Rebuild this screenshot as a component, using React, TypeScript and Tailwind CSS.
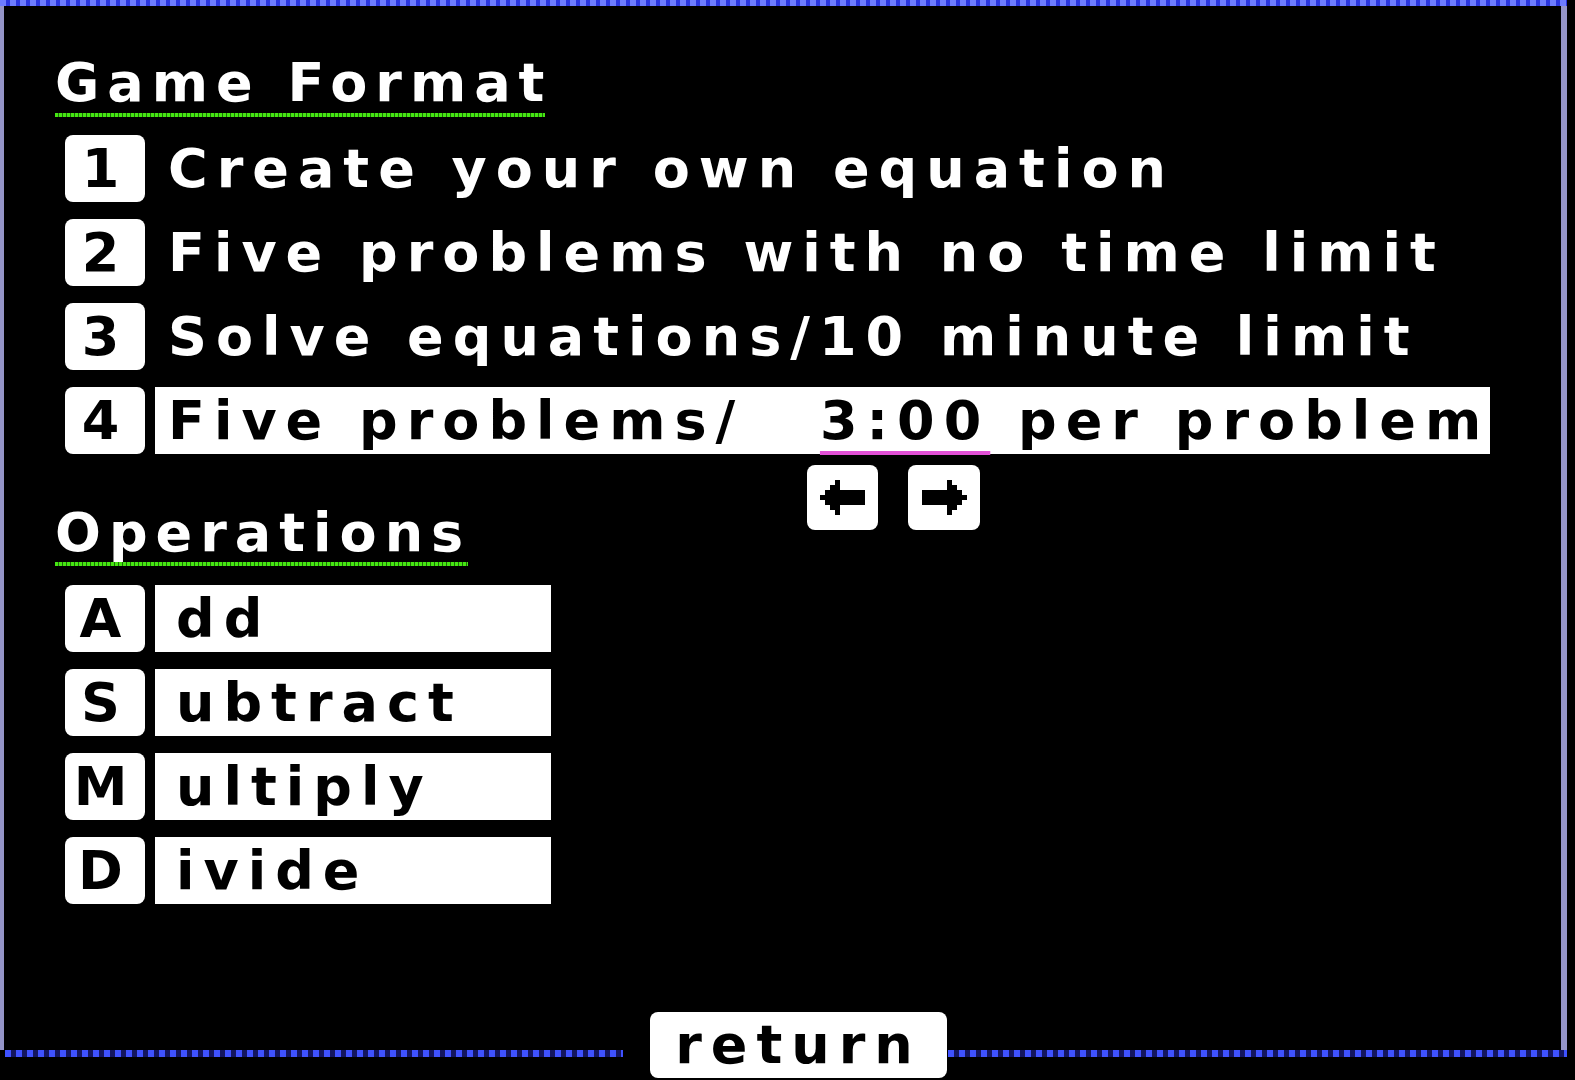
import React from 'react';

const text = "font-['DejaVu_Sans',sans-serif] font-bold text-[54px] leading-[54px] tracking-[9px] whitespace-pre";
const heading = "font-['DejaVu_Sans',sans-serif] font-bold text-[54px] leading-[54px] tracking-[8px] whitespace-pre text-white";

const greenLine =
  'h-[4px] bg-[repeating-linear-gradient(90deg,#45e612_0px,#45e612_3px,#1d6a08_3px,#1d6a08_4px)]';
const blueTop =
  'bg-[repeating-linear-gradient(90deg,#6d7cff_0px,#6d7cff_6px,#2a36e0_6px,#2a36e0_10px)]';
const blueBottom =
  'bg-[repeating-linear-gradient(90deg,#3f52ff_0px,#3f52ff_6px,#141660_6px,#141660_11px)]';

function KeyBox({ k }: { k: string }) {
  return (
    <div className={`ml-[10px] flex h-[67px] w-[80px] shrink-0 items-center justify-center rounded-[8px] bg-white text-black ${text}`}>
      {k}
    </div>
  );
}

function FormatRow({ k, children, selected }: { k: string; children: React.ReactNode; selected?: boolean }) {
  return (
    <div className="flex h-[67px] items-center">
      <KeyBox k={k} />
      <div
        className={
          selected
            ? `ml-[10px] flex h-[67px] w-[1335px] items-center bg-white pl-[13px] text-black ${text}`
            : `ml-[10px] flex h-[67px] items-center pl-[13px] text-white ${text}`
        }
      >
        {children}
      </div>
    </div>
  );
}

function OpRow({ k, rest }: { k: string; rest: string }) {
  return (
    <div className="flex h-[67px] items-center">
      <KeyBox k={k} />
      <div className={`ml-[10px] flex h-[67px] w-[396px] items-center bg-white pl-[21px] text-black ${text}`}>{rest}</div>
    </div>
  );
}

// chunky pixel arrow, 9x7 cells
function PixelArrow({ flip }: { flip?: boolean }) {
  return (
    <svg width="45" height="37" viewBox="0 0 9 7" shapeRendering="crispEdges" className={flip ? '-scale-x-100' : ''}>
      <path d="M0 3H1V2H2V1H3V0H4V2H9V5H4V7H3V6H2V5H1V4H0Z" fill="#000" />
    </svg>
  );
}

export default function App() {
  return (
    <div className="flex h-[1080px] w-full flex-col overflow-hidden bg-black">
      <div className={`h-[6px] w-[1567px] shrink-0 ${blueTop}`} />

      <div className="flex h-[1044px] w-[1567px] shrink-0 flex-col border-l-[4px] border-r-[6px] border-[#9494c8] pl-[51px] pt-[50px]">
        {/* Game Format */}
        <div className={heading}>Game Format</div>
        <div className={`mt-[3px] w-[490px] ${greenLine}`} />

        <div className="mt-[18px] flex flex-col gap-[17px]">
          <FormatRow k="1">Create your own equation</FormatRow>
          <FormatRow k="2">Five problems with no time limit</FormatRow>
          <FormatRow k="3">Solve equations/10 minute limit</FormatRow>
          <FormatRow k="4" selected>
            {'Five problems/  '}
            <span className="ml-[20px] underline decoration-[#e24fd6] decoration-[4px] underline-offset-[12px]">3:00</span>
            {' per problem'}
          </FormatRow>
        </div>

        {/* Operations heading shares its band with the time arrows */}
        <div className="mt-[11px] flex items-start">
          <div className="w-[752px] shrink-0 pt-[41px]">
            <div className={heading}>Operations</div>
            <div className={`mt-[2px] w-[413px] ${greenLine}`} />
          </div>
          <div className="flex gap-[30px]">
            <div className="flex h-[65px] w-[71px] items-center justify-center rounded-[8px] bg-white">
              <PixelArrow />
            </div>
            <div className="flex h-[65px] w-[72px] items-center justify-center rounded-[8px] bg-white">
              <PixelArrow flip />
            </div>
          </div>
        </div>

        <div className="mt-[19px] flex flex-col gap-[17px]">
          <OpRow k="A" rest="dd" />
          <OpRow k="S" rest="ubtract" />
          <OpRow k="M" rest="ultiply" />
          <OpRow k="D" rest="ivide" />
        </div>
      </div>

      <div className="flex h-[30px] shrink-0 items-start">
        <div className={`ml-[5px] h-[7px] w-[618px] ${blueBottom}`} />
        <div className={`-mt-[38px] ml-[27px] flex h-[66px] w-[297px] items-center justify-center rounded-[8px] bg-white text-black ${text}`}>
          return
        </div>
        <div className={`ml-[1px] h-[7px] w-[619px] ${blueBottom}`} />
      </div>
    </div>
  );
}
